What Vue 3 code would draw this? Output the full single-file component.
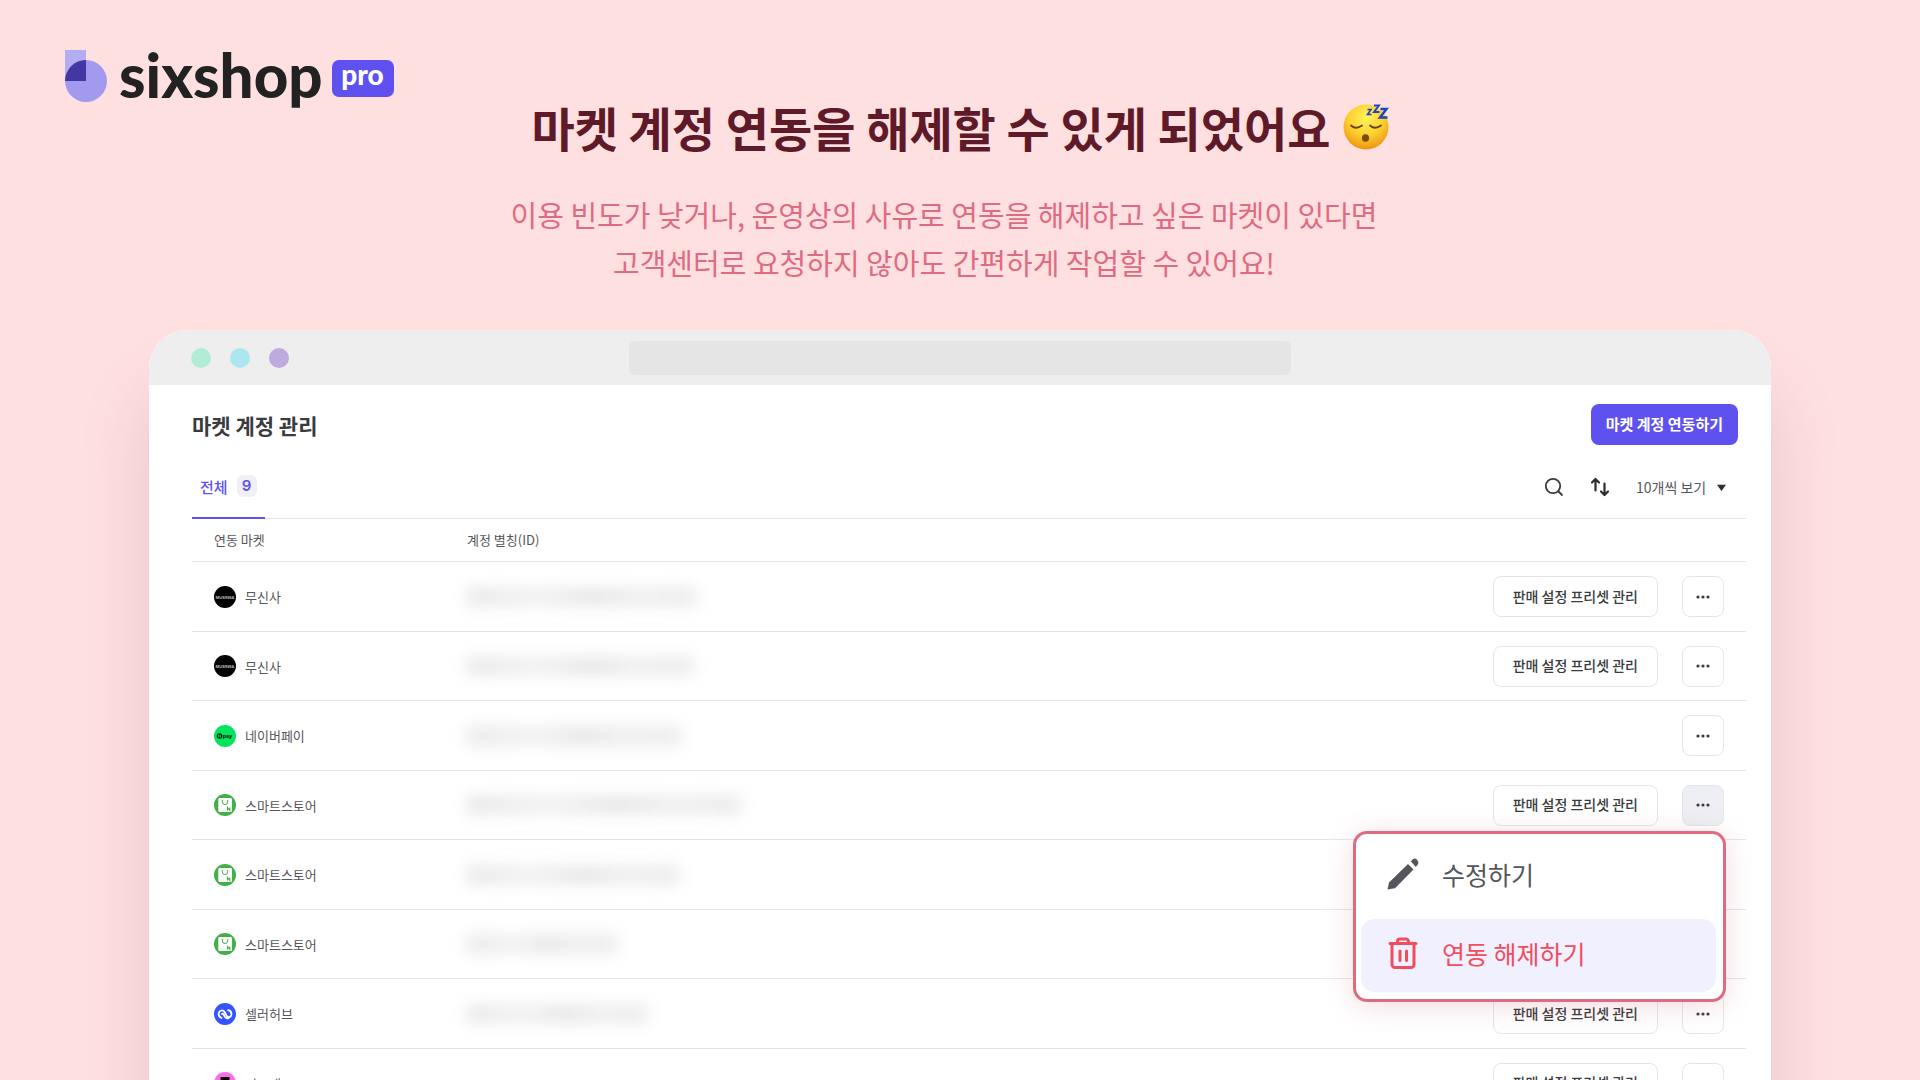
<script setup>
import { ref } from "vue";

const accounts = [
  { id: 1, market: "무신사", logo: "musinsa", idWidth: 230, preset: true },
  { id: 2, market: "무신사", logo: "musinsa", idWidth: 226, preset: true },
  { id: 3, market: "네이버페이", logo: "npay", idWidth: 214, preset: false },
  { id: 4, market: "스마트스토어", logo: "smartstore", idWidth: 274, preset: true },
  { id: 5, market: "스마트스토어", logo: "smartstore", idWidth: 212, preset: false },
  { id: 6, market: "스마트스토어", logo: "smartstore", idWidth: 150, preset: false },
  { id: 7, market: "셀러허브", logo: "sellerhub", idWidth: 180, preset: true },
  { id: 8, market: "지그재그", logo: "zigzag", idWidth: 0, preset: true },
];

const pageSize = ref("10");
const openMenu = ref(4);

function toggleMenu(id) {
  openMenu.value = openMenu.value === id ? null : id;
}
</script>

<template>
  <div class="page">
    <header class="hero">
      <a class="brand" href="#" aria-label="sixshop pro">
        <svg class="brand-mark" viewBox="0 0 42 52" aria-hidden="true">
          <rect width="21" height="31" fill="#b3aef2" />
          <circle cx="21" cy="31" r="21" fill="#a29aee" />
          <path d="M0 31A21 21 0 0 1 21 10V31Z" fill="#4337a3" />
        </svg>
        <span class="brand-name">sixshop</span>
        <span class="brand-badge">pro</span>
      </a>
      <h1 class="hero-title">
        마켓 계정 연동을 해제할 수 있게 되었어요
        <svg class="emoji" viewBox="0 0 46 46" aria-hidden="true">
          <defs>
            <radialGradient id="face" cx="50%" cy="30%" r="70%">
              <stop offset="0" stop-color="#fff45c" />
              <stop offset="0.55" stop-color="#fdd030" />
              <stop offset="1" stop-color="#ec9410" />
            </radialGradient>
          </defs>
          <circle cx="23" cy="23" r="22.5" fill="url(#face)" />
          <path d="M8 21.5q5 4.500 11 0M27 21.500q5 4.500 11 0" fill="none" stroke="#6b4306" stroke-width="1.800" stroke-linecap="round" />
          <ellipse cx="22.500" cy="34" rx="3.600" ry="3.800" fill="#7a4a08" />
          <g fill="none" stroke="#1846c4" stroke-linejoin="miter">
            <path d="M24.500 5.500h3.500l-3.500 5h4" stroke-width="1.600" />
            <path d="M31 1.500h5l-5 6.500h5.500" stroke-width="1.900" />
            <path d="M37.500 5h6l-6.500 8.500h7.500" stroke-width="2.500" />
          </g>
        </svg>
      </h1>
      <p class="hero-text">
        이용 빈도가 낮거나, 운영상의 사유로 연동을 해제하고 싶은 마켓이 있다면<br />
        고객센터로 요청하지 않아도 간편하게 작업할 수 있어요!
      </p>
    </header>

    <main class="window">
      <div class="window-bar">
        <div class="dots">
          <span class="dot green"></span>
          <span class="dot blue"></span>
          <span class="dot purple"></span>
        </div>
        <div class="address"></div>
      </div>

      <div class="content">
        <div class="heading">
          <h2>마켓 계정 관리</h2>
          <button type="button" class="primary">마켓 계정 연동하기</button>
        </div>

        <div class="toolbar">
          <button type="button" class="tab">전체 <span class="count">9</span></button>
          <div class="tools">
            <button type="button" class="icon-btn" aria-label="검색">
              <svg viewBox="0 0 20 20" fill="none" stroke="#3a3b3e" stroke-width="1.800" stroke-linecap="round">
                <circle cx="9" cy="9" r="7.200" />
                <path d="M14.500 14.500 18 18" />
              </svg>
            </button>
            <button type="button" class="icon-btn" aria-label="정렬">
              <svg viewBox="0 0 20 20" fill="none" stroke="#2c2d30" stroke-width="2.200" stroke-linecap="round" stroke-linejoin="round">
                <path d="M5.500 13.500V2.500M2 5.500 5.500 2 9 5.500M14.500 6.500v11M11 14.500l3.500 3.500 3.500-3.500" />
              </svg>
            </button>
            <label class="page-size">
              <select v-model="pageSize" aria-label="페이지당 개수">
                <option value="10">10개씩 보기</option>
                <option value="20">20개씩 보기</option>
                <option value="50">50개씩 보기</option>
              </select>
              <svg viewBox="0 0 8 6" aria-hidden="true"><path d="M0 0.500h8L4 6Z" fill="#2c2d30" /></svg>
            </label>
          </div>
        </div>

        <table class="accounts">
          <thead>
            <tr>
              <th class="col-market">연동 마켓</th>
              <th>계정 별칭(ID)</th>
              <th class="col-actions"></th>
            </tr>
          </thead>
          <tbody>
            <tr v-for="a in accounts" :key="a.id">
              <td>
                <div class="market">
                  <svg class="market-logo" viewBox="0 0 22 22" aria-hidden="true">
                    <template v-if="a.logo === 'musinsa'">
                      <circle cx="11" cy="11" r="11" fill="#000" />
                      <text x="11" y="12.500" text-anchor="middle" class="logo-text" fill="#ccc">MUSINSA</text>
                    </template>
                    <template v-else-if="a.logo === 'npay'">
                      <circle cx="11" cy="11" r="11" fill="#03e35c" />
                      <circle cx="5.500" cy="11" r="2.800" fill="#06220f" />
                      <path d="M4.500 12.400V9.600l2 2.800V9.600" fill="none" stroke="#03e35c" stroke-width="0.700" />
                      <text x="8.800" y="12.700" class="logo-text pay" fill="#06220f">pay</text>
                    </template>
                    <template v-else-if="a.logo === 'smartstore'">
                      <circle cx="11" cy="11" r="11" fill="#41b147" />
                      <rect x="4.300" y="4" width="13.600" height="14" rx="1.200" fill="#fff" />
                      <path d="M8.300 6v1.800a2.700 2.700 0 0 0 5.400 0V6" fill="none" stroke="#41b147" stroke-width="1" />
                      <path d="M13.500 16.500v-3l2.300 3v-3" fill="none" stroke="#41b147" stroke-width="1.100" />
                    </template>
                    <template v-else-if="a.logo === 'sellerhub'">
                      <circle cx="11" cy="11" r="11" fill="#3354ff" />
                      <path d="M7.500 14.800C5.300 14.300 4.300 12.100 4.800 10c.7-2.700 4-3.500 5.600-1.200l2.500 4.300c1.300 2 4.200 1.200 4.500-1.400.2-2.200-1-4-3.300-4.500M7.900 10.900c.6-.5 1.200-.2 1.500.4l1.700 2.700c.9 1.300 2.300 1.700 3.600 1" fill="none" stroke="#fff" stroke-width="1.800" stroke-linecap="round" />
                    </template>
                    <template v-else>
                      <circle cx="11" cy="11" r="11" fill="#fa6ee3" />
                      <path d="M6.500 5h9v4l-4 4h4v4h-9v-4l4-4h-4Z" fill="#000" />
                    </template>
                  </svg>
                  {{ a.market }}
                </div>
              </td>
              <td><div class="masked" :style="{ width: a.idWidth + 'px' }"></div></td>
              <td>
                <div class="actions">
                  <button v-if="a.preset" type="button" class="preset">판매 설정 프리셋 관리</button>
                  <button
                    type="button"
                    class="more"
                    :class="{ active: openMenu === a.id }"
                    aria-label="더보기"
                    @click="toggleMenu(a.id)"
                  >
                    <svg viewBox="0 0 14 4" fill="#3a3b3e" aria-hidden="true">
                      <circle cx="2" cy="2" r="1.600" />
                      <circle cx="7" cy="2" r="1.600" />
                      <circle cx="12" cy="2" r="1.600" />
                    </svg>
                  </button>
                  <div v-if="openMenu === a.id" class="menu">
                    <button type="button" class="menu-item">
                      <svg viewBox="0 0 32 32" fill="#55565b" aria-hidden="true">
                        <path d="M.5 31.500 2 24.500 21 6l5.500 5.500L8 30.200Z" />
                        <path d="M23.800 3.300 26 1.200c1.300-1 2.700-.7 4 .5 1.500 1.400 1.800 3.300.8 4.800l-2 2.600Z" />
                      </svg>
                      수정하기
                    </button>
                    <button type="button" class="menu-item danger">
                      <svg viewBox="0 0 32 32" fill="none" stroke="#f04e5e" stroke-width="3" stroke-linecap="round" stroke-linejoin="round" aria-hidden="true">
                        <path d="M3 6.500h26M5 7v20.500a3 3 0 0 0 3 3H24a3 3 0 0 0 3-3V7" />
                        <path d="M10.500 6V4.500a2.500 2.500 0 0 1 2.500-2.500h6A2.500 2.500 0 0 1 21.500 4.500V6M13 14v9.500M19.500 14v9.500" />
                      </svg>
                      연동 해제하기
                    </button>
                  </div>
                </div>
              </td>
            </tr>
          </tbody>
        </table>
      </div>
    </main>
  </div>
</template>

<style>
body {
  margin: 0;
  background: #ffe0e1;
}
</style>

<style scoped>
.page {
  height: 100vh;
  overflow: hidden;
  background: #ffe0e1;
  font-family: "Noto Sans CJK KR", sans-serif;
  color: #3a3b3e;
}
button,
select {
  font-family: inherit;
  cursor: pointer;
}
h1,
h2,
p {
  margin: 0;
}

/* hero */
.brand {
  display: flex;
  align-items: flex-start;
  width: max-content;
  height: 54px;
  margin-left: 65px;
  padding-top: 50px;
  color: #222;
  text-decoration: none;
  font-family: Lato, sans-serif;
}
.brand-mark {
  width: 42px;
  height: 52px;
}
.brand-name {
  margin-left: 12px;
  font-size: 60px;
  line-height: 50px;
  font-weight: 900;
}
.brand-badge {
  box-sizing: border-box;
  width: 62px;
  height: 37px;
  margin: 10px 0 0 9px;
  border-radius: 7px;
  background: #5f51ef;
  color: #fff;
  font-size: 28px;
  line-height: 28px;
  font-weight: 900;
  text-align: center;
}
.hero-title {
  display: flex;
  align-items: center;
  justify-content: center;
  gap: 12px;
  font-size: 47px;
  line-height: 46px;
  font-weight: 700;
  color: #5f1a2a;
}
.emoji {
  width: 46px;
  height: 46px;
}
.hero-text {
  margin-top: 40px;
  padding-right: 32px;
  font-size: 29px;
  line-height: 48px;
  text-align: center;
  color: #df6b82;
}

/* browser window */
.window {
  margin: 44px 149px 0;
  border-radius: 38px 38px 0 0;
  background: #fff;
  box-shadow: 0 60px 70px rgba(120, 70, 90, 0.18);
}
.window-bar {
  display: grid;
  grid-template-columns: 1fr 2fr 1fr;
  align-items: center;
  height: 55px;
  padding: 0 42px;
  border-radius: 38px 38px 0 0;
  background: #eee;
}
.dots {
  display: flex;
  gap: 19px;
}
.dot {
  width: 20px;
  height: 20px;
  border-radius: 50%;
}
.green {
  background: #b1edd5;
}
.blue {
  background: #ace6f0;
}
.purple {
  background: #bcabdc;
}
.address {
  justify-self: center;
  width: 86%;
  height: 34px;
  border-radius: 6px;
  background: #e5e5e5;
}
.content {
  padding: 19px 25px 0 43px;
}
.heading {
  display: flex;
  align-items: center;
  justify-content: space-between;
  padding-right: 8px;
}
.heading h2 {
  font-size: 21px;
  line-height: 28px;
  font-weight: 700;
}
.primary {
  height: 41px;
  padding: 0 15px 2px;
  border: 0;
  border-radius: 8px;
  background: #5f51ef;
  color: #fff;
  font-size: 15px;
  font-weight: 700;
}

/* tab and tools */
.toolbar {
  display: flex;
  align-items: stretch;
  justify-content: space-between;
  height: 64px;
  margin-top: 10px;
  box-shadow: inset 0 -1px #e6e6ea;
}
.tab {
  display: flex;
  align-items: center;
  gap: 9px;
  padding: 0 8px;
  border: 0;
  border-bottom: 2px solid #5f51ef;
  background: none;
  color: #5f51ef;
  font-size: 15px;
  font-weight: 500;
}
.count {
  width: 20px;
  border-radius: 6px;
  background: #f0f0f5;
  font-family: Inter, sans-serif;
  font-size: 15px;
  line-height: 22px;
  font-weight: 600;
}
.tools {
  display: flex;
  align-items: center;
  gap: 26px;
  padding-right: 20px;
}
.icon-btn {
  display: flex;
  padding: 0;
  border: 0;
  background: none;
}
.icon-btn svg {
  width: 20px;
  height: 20px;
}
.page-size {
  display: flex;
  align-items: center;
  gap: 10px;
}
.page-size select {
  appearance: none;
  padding: 0;
  border: 0;
  background: none;
  color: #55565b;
  font-size: 14px;
}
.page-size svg {
  width: 9px;
  height: 7px;
}

/* accounts */
.accounts {
  width: 100%;
  border-spacing: 0;
  table-layout: fixed;
  font-size: 13px;
  color: #55565b;
}
th,
td {
  box-sizing: border-box;
  padding: 0 22px;
  border-bottom: 1px solid #e6e6ea;
  text-align: left;
}
th {
  height: 43px;
  padding-bottom: 2px;
  font-weight: 400;
}
td {
  height: 70px;
}
tr:nth-child(even) td {
  height: 69px;
}
.col-market {
  width: 253px;
}
.col-actions {
  width: 300px;
}
.market {
  display: flex;
  align-items: center;
  gap: 9px;
}
.market-logo {
  width: 22px;
  height: 22px;
}
.logo-text {
  font-family: Inter, sans-serif;
  font-size: 4px;
  font-weight: 600;
}
.pay {
  font-size: 5px;
  font-weight: 800;
}
.masked {
  height: 18px;
  background: linear-gradient(90deg, #e6e6e6, #f0f0f0 30%, #e6e6e6 55%, #ededed 75%, #e9e9e9);
  filter: blur(8px);
}
.actions {
  position: relative;
  display: flex;
  justify-content: flex-end;
  gap: 24px;
}
.preset,
.more {
  box-sizing: border-box;
  height: 41px;
  border: 1px solid #e6e6ea;
  border-radius: 8px;
  background: #fff;
}
.preset {
  padding: 0 19px 2px;
  color: #3a3b3e;
  font-size: 14px;
  font-weight: 500;
}
.more {
  display: flex;
  align-items: center;
  justify-content: center;
  width: 42px;
  padding: 0;
}
.more svg {
  width: 14px;
  height: 4px;
}
.more.active {
  background: #eeeff4;
}

/* row menu */
.menu {
  position: absolute;
  z-index: 2;
  top: 46px;
  right: -2px;
  box-sizing: border-box;
  display: flex;
  flex-direction: column;
  gap: 6px;
  width: 373px;
  padding: 6px 7px 7px 5px;
  border: 3px solid #df6b82;
  border-radius: 14px;
  background: #fff;
  box-shadow: 0 4px 28px rgba(200, 90, 110, 0.22);
}
.menu-item {
  display: flex;
  align-items: center;
  gap: 23px;
  height: 73px;
  padding: 0 26px 4px;
  border: 0;
  border-radius: 14px;
  background: none;
  color: #55565b;
  font-size: 25px;
}
.menu-item svg {
  width: 32px;
  height: 32px;
}
.menu-item.danger {
  background: #f1f0fe;
  color: #f04e5e;
}
</style>
